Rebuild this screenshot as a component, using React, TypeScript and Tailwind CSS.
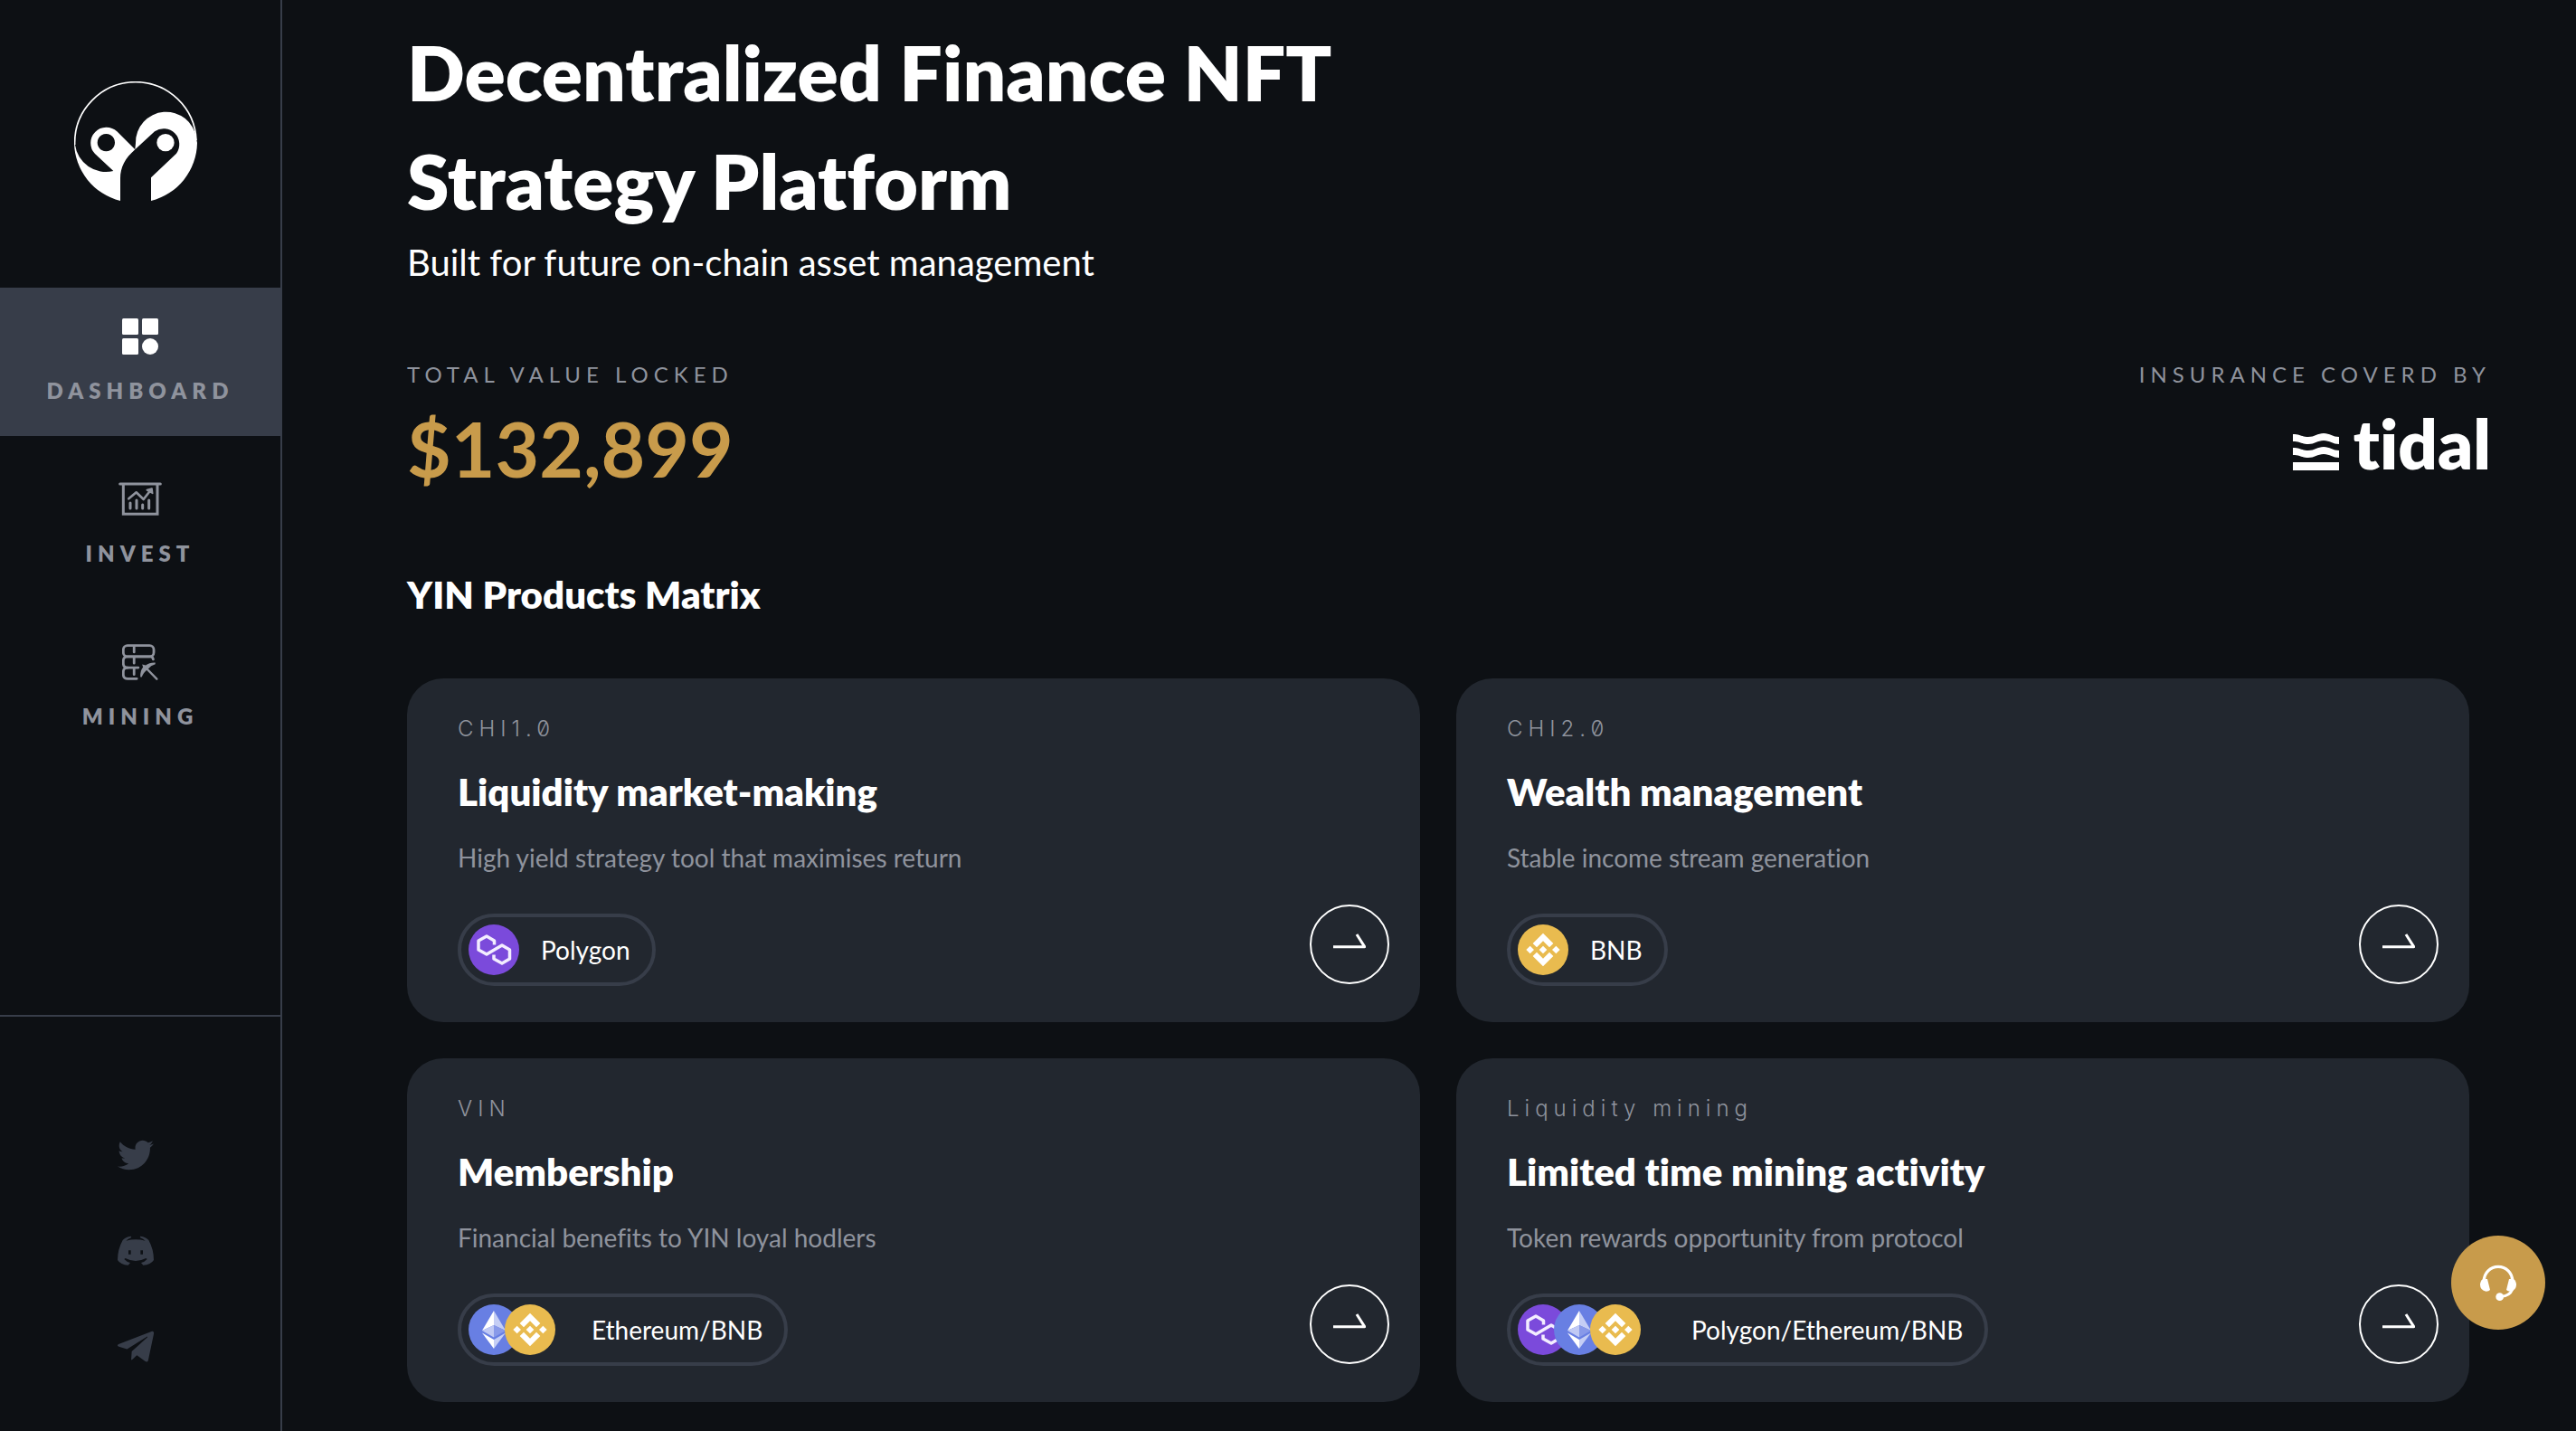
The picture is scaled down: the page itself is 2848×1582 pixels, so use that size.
import { ReactNode } from 'react';
import { FaTelegramPlane, FaTwitter } from 'react-icons/fa';
import clsx from 'clsx';

type Chain = 'polygon' | 'ethereum' | 'bnb';

interface Product {
  tag: string;
  title: string;
  description: string;
  chains: Chain[];
  network: string;
}

const products: Product[] = [
  {
    tag: 'CHI1.0',
    title: 'Liquidity market-making',
    description: 'High yield strategy tool that maximises return',
    chains: ['polygon'],
    network: 'Polygon',
  },
  {
    tag: 'CHI2.0',
    title: 'Wealth management',
    description: 'Stable income stream generation',
    chains: ['bnb'],
    network: 'BNB',
  },
  {
    tag: 'VIN',
    title: 'Membership',
    description: 'Financial benefits to YIN loyal hodlers',
    chains: ['ethereum', 'bnb'],
    network: 'Ethereum/BNB',
  },
  {
    tag: 'Liquidity mining',
    title: 'Limited time mining activity',
    description: 'Token rewards opportunity from protocol',
    chains: ['polygon', 'ethereum', 'bnb'],
    network: 'Polygon/Ethereum/BNB',
  },
];

function Logo() {
  return (
    <svg viewBox="246 90 408 408" className="size-[136px]" fill="#fff" aria-hidden="true">
      <path d="M248 300A202 202 0 0 1 450 92A202 202 0 0 1 651 285" fill="none" stroke="#fff" strokeWidth="5" />
      <path
        fillRule="evenodd"
        d="M249 300A103 103 0 0 0 376 387L315 330A52 52 0 0 1 388 256L448 316C415 345 399 375 399 412V486A202 202 0 0 1 246 294ZM352 264a29 29 0 1 0 .1 0Z"
      />
      <path d="M448 316L450 294A101 101 0 0 1 651 278L654 294A202 202 0 0 1 501 486V409L585 329A52 52 0 0 0 513 256Z" />
      <circle cx="549" cy="293" r="29" />
    </svg>
  );
}

function DashboardIcon() {
  return (
    <svg viewBox="0 0 40 40" className="h-10" fill="#fff" aria-hidden="true">
      <rect width="18" height="18" rx="1.5" />
      <rect x="22" width="18" height="18" rx="1.5" />
      <rect y="22" width="18" height="18" rx="1.5" />
      <circle cx="31" cy="31" r="9" />
    </svg>
  );
}

function InvestIcon() {
  return (
    <svg viewBox="389 97 144 120" className="h-10" fill="none" stroke="currentColor" strokeWidth="9" strokeLinecap="round" aria-hidden="true">
      <path d="M394 106H528M405 106V206H518V106" />
      <path d="M423 155L448 134L472 157L493 130" strokeLinejoin="round" strokeWidth="8" />
      <path d="M483 126L500 121L502 137Z" fill="currentColor" strokeWidth="5" strokeLinejoin="round" />
      <path d="M428 169V187M449 160V187M469 175V187M490 160V187" />
    </svg>
  );
}

function MiningIcon() {
  return (
    <svg viewBox="402 635 120 121" className="h-10" fill="none" stroke="currentColor" strokeWidth="8.5" strokeLinecap="round" aria-hidden="true">
      <rect x="406" y="640" width="102" height="37" rx="14" />
      <path d="M506 686Q505 677 496 677H421Q406 677 406 691V700Q406 714 421 714H456" />
      <path d="M421 714Q406 714 406 728V737Q406 751 421 751H451" />
      <path d="M442 645V662M442 680V699M442 716V737" />
      <path d="M478 711L518 752" strokeWidth="7" />
      <path
        stroke="none"
        fill="currentColor"
        d="M463 744Q462 725 472 712L469 703L481 706Q494 696 513 697V702Q498 706 489 718Q474 729 468 745Q465 748 463 744Z"
      />
    </svg>
  );
}

function DiscordIcon() {
  return (
    <svg viewBox="210 799 120 100" className="w-10" fill="currentColor" aria-hidden="true">
      <path
        fillRule="evenodd"
        d="M254 801L256 805Q244 810 238 816Q270 808 302 816Q296 810 284 805L286 801Q304 803 313 814Q330 845 330 880Q320 896 295 897L288 889Q300 886 308 877L304 874Q270 892 236 874L232 877Q240 886 252 889L245 897Q220 896 210 880Q210 845 227 814Q236 803 254 801ZM246 848V861H254V848ZM286 848V861H294V848Z"
      />
    </svg>
  );
}

function HeadsetIcon() {
  return (
    <svg viewBox="546 174 120 120" className="size-10" fill="#fff" aria-hidden="true">
      <path d="M559 228A47 47 0 1 1 653 228" fill="none" stroke="#fff" strokeWidth="10" />
      <path d="M555 222H570L579 258Q575 263 566 263Q546 260 546 241Q546 229 555 222Z" />
      <path d="M657 222H642L633 258Q637 263 646 263Q666 260 666 241Q666 229 657 222Z" />
      <path d="M653 256Q644 278 616 280" fill="none" stroke="#fff" strokeWidth="9" />
      <circle cx="611" cy="281" r="13" />
    </svg>
  );
}

function ArrowIcon() {
  return (
    <svg viewBox="222 216 108 72" className="w-9" fill="none" stroke="#fff" strokeWidth="9" aria-hidden="true">
      <path d="M222 260H326L300 219" strokeLinejoin="round" />
    </svg>
  );
}

function ChainIcon({ chain }: { chain: Chain }) {
  if (chain === 'polygon') {
    return (
      <svg viewBox="0 0 56 56" className="size-14" aria-hidden="true">
        <circle cx="28" cy="28" r="28" fill="#7b4adb" />
        <path
          d="M28.5 22.5V18L20 13L11 18V28L20 33L37 23L45.500 28V38L37 43L28 38V33.500"
          fill="none"
          stroke="#f3edff"
          strokeWidth="3.5"
          strokeLinejoin="round"
        />
      </svg>
    );
  }

  if (chain === 'ethereum') {
    return (
      <svg viewBox="0 0 56 56" className="size-14" aria-hidden="true">
        <circle cx="28" cy="28" r="28" fill="#687fe3" />
        <path d="M28 7L15 29L28 23Z" fill="#fff" />
        <path d="M28 7V23L41 29Z" fill="#c5cef5" />
        <path d="M15 29L28 23V36.5Z" fill="#c0c9f4" />
        <path d="M28 23L41 29L28 36.5Z" fill="#8899e9" />
        <path d="M15 31.5L28 39V49Z" fill="#fff" />
        <path d="M41 31.5L28 39V49Z" fill="#c5cef5" />
      </svg>
    );
  }

  return (
    <svg viewBox="834 186 168 168" className="size-14" fill="#fff" aria-hidden="true">
      <circle cx="918" cy="270" r="84" fill="#e9bb4f" />
      <path d="M918 215L952 249L939 262L918 241L897 262L884 249Z" />
      <path d="M918 325L952 291L939 278L918 299L897 278L884 291Z" />
      <path d="M918 257L931 270L918 283L905 270ZM875 257L888 270L875 283L862 270ZM961 257L974 270L961 283L948 270Z" />
    </svg>
  );
}

function NavItem({ label, icon, active = false }: { label: string; icon: ReactNode; active?: boolean }) {
  return (
    <a
      href="#"
      aria-current={active ? 'page' : undefined}
      className={clsx(
        'flex flex-col items-center gap-6 py-[34px] text-2xl/8 font-extrabold tracking-[6px] text-[#8f939d]',
        active && 'bg-[#373d49]'
      )}
    >
      {icon}
      {label}
    </a>
  );
}

function Sidebar() {
  return (
    <aside className="sticky top-0 flex h-screen w-[312px] shrink-0 flex-col border-r-2 border-[#373d49]">
      <a href="#" aria-label="YIN" className="mx-auto pt-[90px] pr-[10px] pb-[92px]">
        <Logo />
      </a>
      <nav className="flex flex-col gap-4">
        <NavItem label="DASHBOARD" icon={<DashboardIcon />} active />
        <NavItem label="INVEST" icon={<InvestIcon />} />
        <NavItem label="MINING" icon={<MiningIcon />} />
      </nav>
      <div className="mt-auto flex flex-col items-center gap-[66px] border-t-2 border-[#373d49] pt-[133px] pr-[10px] pb-[73px] text-[#373d49]">
        <a href="#" aria-label="Twitter">
          <FaTwitter className="size-10" />
        </a>
        <a href="#" aria-label="Discord" className="flex h-10 items-center">
          <DiscordIcon />
        </a>
        <a href="#" aria-label="Telegram" className="flex h-10 items-center">
          <FaTelegramPlane className="size-[46px]" />
        </a>
      </div>
    </aside>
  );
}

function ProductCard({ product }: { product: Product }) {
  return (
    <article className="rounded-[40px] bg-[#22272f] py-10 pr-[34px] pl-14">
      <p className="font-['Inter',sans-serif] text-2xl/8 font-light tracking-[6px] text-[#8f939d] slashed-zero">{product.tag}</p>
      <h3 className="mt-7 text-[42px]/[50px] font-extrabold">{product.title}</h3>
      <p className="mt-7 text-[28px]/10 text-[#8f939d]">{product.description}</p>
      <div className="mt-8 flex h-[90px] items-end justify-between">
        <div className="flex h-20 items-center rounded-full border-4 border-[#373d49] pr-6 pl-2">
          <div className="flex -space-x-4">
            {product.chains.map((chain) => (
              <ChainIcon key={chain} chain={chain} />
            ))}
          </div>
          <span
            className={clsx(
              'text-[28px]/10',
              product.chains.length === 1 && 'ml-6',
              product.chains.length === 2 && 'ml-10',
              product.chains.length === 3 && 'ml-14'
            )}
          >
            {product.network}
          </span>
        </div>
        <button
          type="button"
          aria-label={`Open ${product.title}`}
          className="flex size-[88px] items-center justify-center self-start rounded-full border-2 border-white"
        >
          <ArrowIcon />
        </button>
      </div>
    </article>
  );
}

function TidalLogo() {
  return (
    <a href="#" aria-label="tidal" className="flex items-end gap-4">
      <svg viewBox="0 0 51 41" className="mb-[18px] w-[51px]" fill="#fff" aria-hidden="true">
        <path d="M0 1C8 1 10 4 17 4S27 0 34 0S44 4 51 4V12C44 12 41 8 34 8S24 12 17 12S8 9 0 9Z" />
        <path d="M0 16C8 16 10 19 17 19S27 15 34 15S44 19 51 19V27C44 27 41 23 34 23S24 27 17 27S8 24 0 24Z" />
        <path d="M0 32H51V41H0Z" />
      </svg>
      <span className="text-[76px]/24 font-extrabold">tidal</span>
    </a>
  );
}

export default function App() {
  return (
    <div className="flex min-h-screen bg-[#0d1014] font-['Lato',sans-serif] text-white [font-variant-ligatures:no-common-ligatures]">
      <Sidebar />
      <main className="min-w-0 flex-1 pt-5 pr-[94px] pb-8 pl-[138px]">
        <h1 className="max-w-[1200px] text-[84px]/[120px] font-extrabold">
          Decentralized Finance NFT
          <br />
          Strategy Platform
        </h1>
        <p className="text-[40px]/[60px]">Built for future on-chain asset management</p>

        <section className="mt-[78px] flex justify-between">
          <div>
            <p className="text-2xl/8 tracking-[6px] text-[#8f939d]">TOTAL VALUE LOCKED</p>
            <p className="mt-[18px] text-[84px]/24 font-bold text-[#c89b4b]">$132,899</p>
          </div>
          <div className="flex flex-col items-end">
            <p className="text-2xl/8 tracking-[6px] text-[#8f939d]">INSURANCE COVERD BY</p>
            <div className="mt-3">
              <TidalLogo />
            </div>
          </div>
        </section>

        <section className="mt-[88px]">
          <h2 className="text-[42px]/[50px] font-extrabold">YIN Products Matrix</h2>
          <div className="mt-[68px] grid grid-cols-2 gap-10 pr-6">
            {products.map((product) => (
              <ProductCard key={product.tag} product={product} />
            ))}
          </div>
        </section>
      </main>
      <button
        type="button"
        aria-label="Support"
        className="fixed right-[34px] bottom-28 flex size-[104px] items-center justify-center rounded-full bg-[#c89b4b]"
      >
        <HeadsetIcon />
      </button>
    </div>
  );
}
